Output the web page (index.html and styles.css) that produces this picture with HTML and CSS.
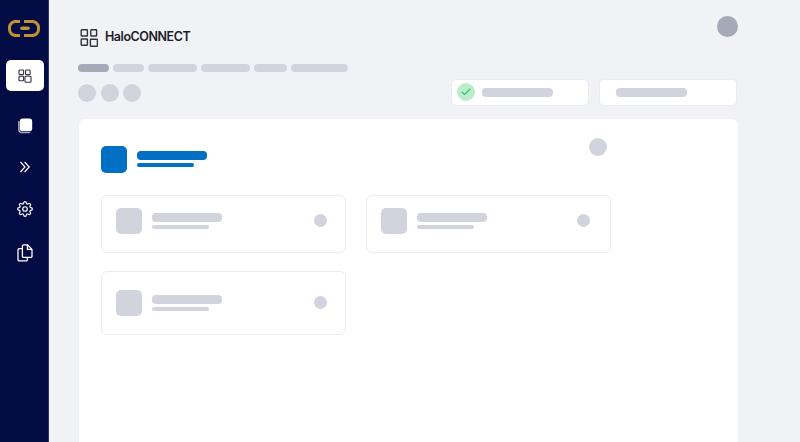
FILE: index.html

```html
<!DOCTYPE html>
<html lang="en">
<head>
	<meta charset="UTF-8">
	<title>HaloCONNECT</title>
	<link rel="stylesheet" href="styles.css">
</head>
<body>
	<div class="app">
		<div class="sidebar">
			<svg class="logo" width="32" height="17" viewBox="0 0 32 17" fill="none" stroke="#c1922f" stroke-width="3" stroke-linecap="butt">
				<path d="M12 1.600H7.500A6 6 0 0 0 1.500 7.600V9.400A6 6 0 0 0 7.500 15.400H12"/>
				<path d="M16 1.600H24.500A6 6 0 0 1 30.500 7.600V9.400A6 6 0 0 1 24.500 15.400H16"/>
				<path d="M14 8.300H20" stroke-width="3.600" stroke-linecap="round"/>
			</svg>
			<ul class="nav">
				<li class="nav_on">
					<svg width="14" height="14" viewBox="0 0 14 14" fill="none" stroke="#30323e" stroke-width="1.100">
						<rect x="1" y="1" width="4.600" height="4.600" rx=".8"/>
						<rect x="7.600" y="1" width="4.600" height="4.600" rx=".8"/>
						<rect x="1" y="7.200" width="4.600" height="4.600" rx=".8"/>
						<rect x="7" y="7.200" width="6" height="6" rx=".8"/>
					</svg>
				</li>
				<li class="nav_stack">
					<svg width="16" height="16" viewBox="0 0 16 16">
						<path d="M1.800 3V11.600A3 3 0 0 0 4.800 14.600H13" fill="none" stroke="#a9adc4" stroke-width="1.400"/>
						<rect x="2.800" y=".6" width="12.400" height="12.600" rx="2.800" fill="#fff"/>
					</svg>
				</li>
				<li class="nav_chevron">
					<svg width="12" height="12" viewBox="0 0 12 12" fill="none" stroke="#fff" stroke-width="1.200">
						<path d="M1.400 1L6 6L1.400 11"/>
						<path d="M5.600 1L10.200 6L5.600 11"/>
					</svg>
				</li>
				<li class="nav_gear">
					<svg width="16" height="16" viewBox="0 0 24 24" fill="none" stroke="#fff" stroke-width="1.800" stroke-linejoin="round">
						<circle cx="12" cy="12" r="3.400"/>
						<path d="M19.400 15a1.700 1.700 0 0 0 .3 1.800l.1.1a2 2 0 1 1-2.900 2.900l-.1-.1a1.700 1.700 0 0 0-2.800 1.200V21a2 2 0 0 1-4 0v-.1A1.700 1.700 0 0 0 7.200 19.700l-.1.1a2 2 0 1 1-2.900-2.900l.1-.1a1.700 1.700 0 0 0-1.200-2.800H3a2 2 0 0 1 0-4h.1A1.700 1.700 0 0 0 4.300 7.200l-.1-.1a2 2 0 1 1 2.900-2.900l.1.1a1.700 1.700 0 0 0 2.800-1.200V3a2 2 0 0 1 4 0v.1a1.700 1.700 0 0 0 2.800 1.200l.1-.1a2 2 0 1 1 2.900 2.900l-.1.1a1.700 1.700 0 0 0 1.200 2.800H21a2 2 0 0 1 0 4h-.1a1.700 1.700 0 0 0-1.500 1z"/>
					</svg>
				</li>
				<li class="nav_docs">
					<svg width="16" height="18" viewBox="0 0 16 18" fill="none" stroke="#fff" stroke-width="1.300" stroke-linejoin="round">
						<path d="M5.400 4.600H2.200A1.200 1.200 0 0 0 1 5.800V15.600A1.200 1.200 0 0 0 2.200 16.800H9.200A1.200 1.200 0 0 0 10.400 15.600V13.400"/>
						<path d="M5.400 2A1.200 1.200 0 0 1 6.600 .8H10.400L15 5.400V12.200A1.200 1.200 0 0 1 13.800 13.400H6.600A1.200 1.200 0 0 1 5.400 12.200Z"/>
						<path d="M10.400 .8V5.400H15"/>
					</svg>
				</li>
			</ul>
		</div>
		<div class="main">
			<div class="top">
				<div class="brand">
					<svg width="18" height="18" viewBox="0 0 18 18" fill="none" stroke="#30323e" stroke-width="1.400">
						<rect x="1.200" y=".8" width="6.200" height="6.200" rx=".6"/>
						<rect x="10.800" y=".8" width="5.800" height="6.200" rx=".6"/>
						<rect x="1.200" y="10" width="6.200" height="6.200" rx=".6"/>
						<rect x="10.400" y="10.200" width="7" height="7" rx=".6"/>
					</svg>
					<span class="brand_name">HaloCONNECT</span>
				</div>
				<i class="avatar"></i>
			</div>
			<ul class="tabs">
				<li class="tab_on"></li>
				<li class="w31"></li>
				<li class="w49"></li>
				<li class="w49"></li>
				<li class="w33"></li>
				<li class="w57"></li>
			</ul>
			<div class="tools">
				<div class="dots">
					<i></i>
					<i></i>
					<i></i>
				</div>
				<div class="pills">
					<div class="pill">
						<i class="check">
							<svg width="10" height="8" viewBox="0 0 10 8" fill="none" stroke="#1fbf75" stroke-width="1.100">
								<path d="M.8 3.800L3.600 6.500L9.200 1"/>
							</svg>
						</i>
						<b class="bar_m"></b>
					</div>
					<div class="pill pill_plain">
						<b class="bar_m"></b>
					</div>
				</div>
			</div>
			<div class="panel">
				<div class="panel_head">
					<div class="panel_title">
						<i class="square square_blue"></i>
						<div class="lines">
							<b class="line_big blue"></b>
							<b class="line_small blue"></b>
						</div>
					</div>
					<i class="panel_dot"></i>
				</div>
				<div class="items">
					<div class="item">
						<i class="square"></i>
						<div class="lines">
							<b class="line_big"></b>
							<b class="line_small"></b>
						</div>
						<i class="item_dot"></i>
					</div>
					<div class="item item_right">
						<i class="square"></i>
						<div class="lines">
							<b class="line_big"></b>
							<b class="line_small"></b>
						</div>
						<i class="item_dot"></i>
					</div>
					<div class="item item_tall">
						<i class="square"></i>
						<div class="lines">
							<b class="line_big"></b>
							<b class="line_small"></b>
						</div>
						<i class="item_dot"></i>
					</div>
				</div>
			</div>
		</div>
	</div>
</body>
</html>
```

FILE: styles.css

```css
/* reset */
*{ margin:0; padding:0; box-sizing:border-box; }
html,body{ height:100%; overflow:hidden; }
body{ font-family:Inter,"Liberation Sans",Arial,sans-serif; background:#f0f2f6; }
li{ list-style:none; }
i,b{ display:block; }
svg{ display:block; }

.app{ display:flex; height:442px; }

/* sidebar */
.sidebar{ width:49px; flex:none; background:#020b44; border-right:1px solid #2b3569; padding:20px 4px 0 6px; }
.logo{ margin-left:2px; }
.nav{ margin-top:23px; }
.nav li{ display:flex; align-items:center; justify-content:center; }
.nav .nav_on{ height:31px; background:#fff; border-radius:5px; }
.nav_stack{ margin-top:26px; height:18px; }
.nav_chevron{ margin-top:23px; height:18px; }
.nav_gear{ margin-top:24px; height:18px; }
.nav_docs{ margin-top:26px; height:18px; }

/* main */
.main{ flex:1; padding:16px 62px 0 30px; min-width:0; }
.top{ display:flex; justify-content:space-between; height:47.7px; }
.brand{ display:flex; align-items:center; gap:7px; padding:13px 0 0 1px; height:31px; }
.brand_name{ font-size:12.5px; font-weight:600; letter-spacing:-.45px; color:#1c1d26; position:relative; top:-2px; }
.avatar{ width:21px; height:21px; border-radius:50%; background:#a6a9b7; }

.tabs{ display:flex; gap:4px; margin-left:-.6px; }
.tabs li{ height:8.6px; border-radius:4px; background:#d1d4dc; width:31px; }
.tabs .tab_on{ background:#a6a9b7; }
.tabs .w49{ width:49px; }
.tabs .w33{ width:33px; }
.tabs .w57{ width:56.6px; }

.tools{ display:flex; justify-content:space-between; align-items:flex-start; margin-top:6.7px; height:40px; }
.dots{ display:flex; gap:4.4px; margin:5px 0 0 -.6px; }
.dots i{ width:18px; height:18px; border-radius:50%; background:#d1d4dc; }
.pills{ display:flex; gap:9.3px; margin-right:1.3px; }
.pill{ width:138px; height:27px; background:#fff; border:1px solid #ebecf1; border-radius:5px; display:flex; align-items:center; gap:7px; padding-left:5px; }
.pill_plain{ padding-left:16px; }
.bar_m{ width:71px; height:9px; border-radius:4px; background:#d1d4dc; }
.check{ width:18px; height:18px; border-radius:50%; background:#bcecca; display:flex; align-items:center; justify-content:center; }

/* panel */
.panel{ height:330px; background:#fff; border-radius:6px; padding:19px 22px 0; }
.panel_head{ display:flex; justify-content:space-between; align-items:flex-start; width:506px; height:57px; }
.panel_title{ display:flex; align-items:center; gap:10px; margin-top:8px; }
.panel_dot{ width:18px; height:18px; border-radius:50%; background:#d1d4dc; }
.square{ width:26px; height:26px; border-radius:5px; background:#d1d4dc; flex:none; }
.square_blue{ height:27px; background:#016fc4; }
.lines{ display:flex; flex-direction:column; gap:3px; }
.line_big{ width:70px; height:9px; border-radius:4px; background:#d1d4dc; }
.line_small{ width:57px; height:4px; border-radius:2px; background:#d1d4dc; }
.blue{ background:#016fc4; }

.items{ display:grid; grid-template-columns:245px 245px; column-gap:20px; row-gap:18px; }
.item{ height:58px; border:1px solid #ebecf1; border-radius:6px; display:flex; align-items:center; gap:10px; padding:0 18px 6px 14px; }
.item_right{ padding-right:20px; }
.item_tall{ height:64px; padding-bottom:0; }
.item_dot{ width:13px; height:13px; border-radius:50%; background:#d1d4dc; margin-left:auto; }
```
